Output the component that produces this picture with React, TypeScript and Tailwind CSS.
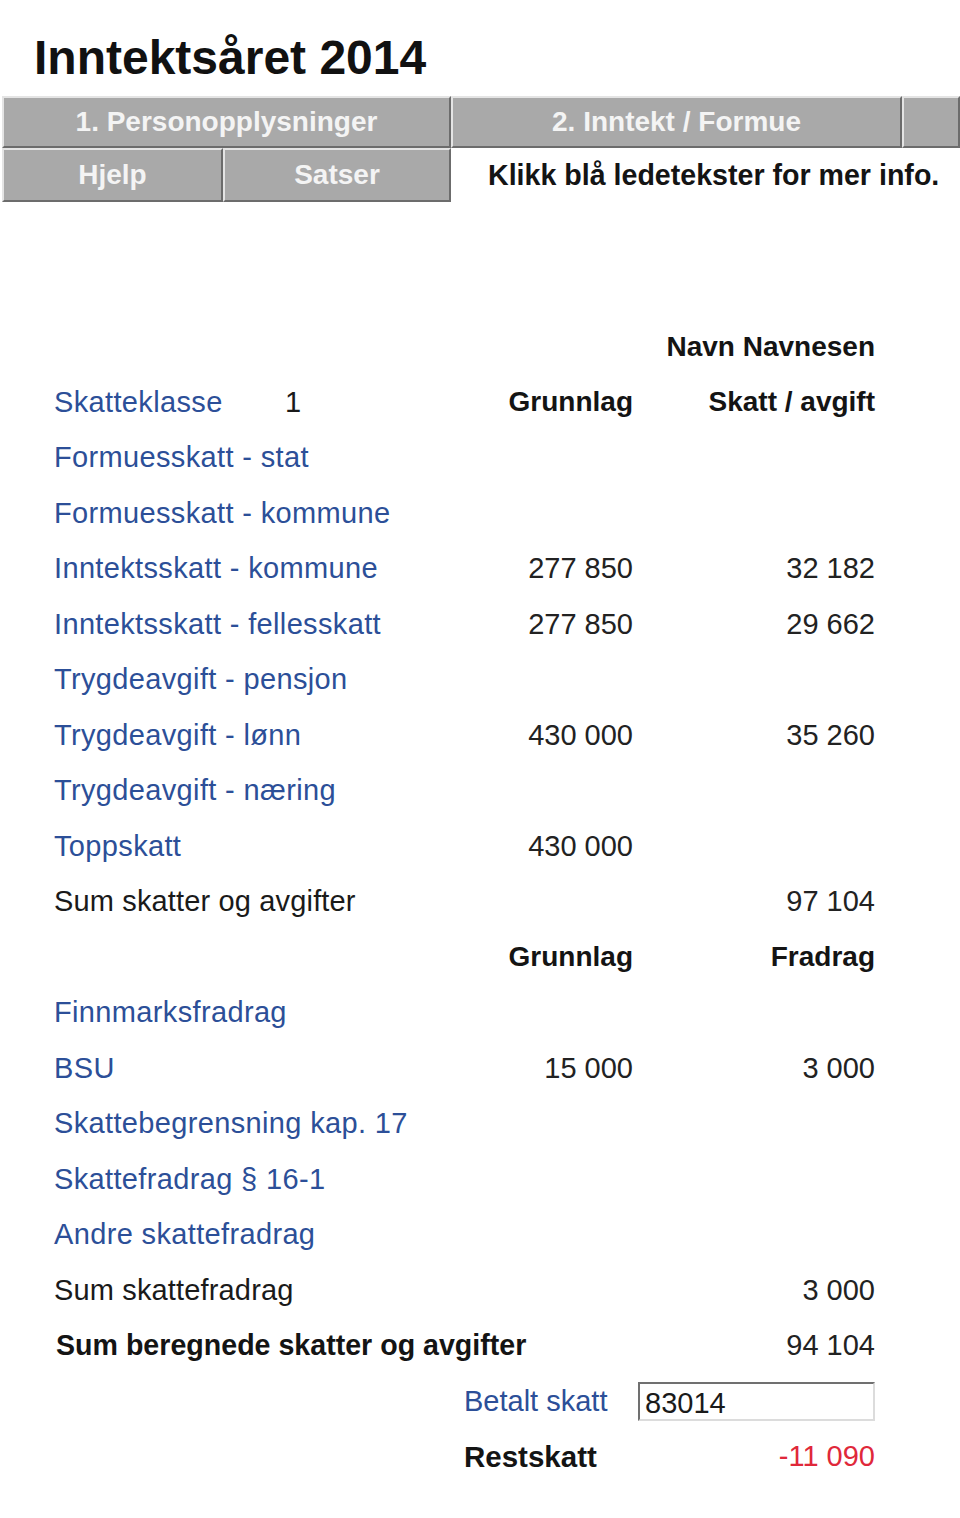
import React from 'react';

type Row = {
  label?: string;
  kind?: 'link' | 'plain' | 'bold';
  extra?: string;
  base?: string;
  value?: string;
  headBase?: boolean;
  headValue?: boolean;
};

const rows: Row[] = [
  { value: 'Navn Navnesen', headValue: true },
  { label: 'Skatteklasse', kind: 'link', extra: '1', base: 'Grunnlag', value: 'Skatt / avgift', headBase: true, headValue: true },
  { label: 'Formuesskatt - stat', kind: 'link' },
  { label: 'Formuesskatt - kommune', kind: 'link' },
  { label: 'Inntektsskatt - kommune', kind: 'link', base: '277 850', value: '32 182' },
  { label: 'Inntektsskatt - fellesskatt', kind: 'link', base: '277 850', value: '29 662' },
  { label: 'Trygdeavgift - pensjon', kind: 'link' },
  { label: 'Trygdeavgift - lønn', kind: 'link', base: '430 000', value: '35 260' },
  { label: 'Trygdeavgift - næring', kind: 'link' },
  { label: 'Toppskatt', kind: 'link', base: '430 000' },
  { label: 'Sum skatter og avgifter', kind: 'plain', value: '97 104' },
  { base: 'Grunnlag', value: 'Fradrag', headBase: true, headValue: true },
  { label: 'Finnmarksfradrag', kind: 'link' },
  { label: 'BSU', kind: 'link', base: '15 000', value: '3 000' },
  { label: 'Skattebegrensning kap. 17', kind: 'link' },
  { label: 'Skattefradrag § 16-1', kind: 'link' },
  { label: 'Andre skattefradrag', kind: 'link' },
  { label: 'Sum skattefradrag', kind: 'plain', value: '3 000' },
  { label: 'Sum beregnede skatter og avgifter', kind: 'bold', value: '94 104' },
];

const tab =
  'flex items-center justify-center bg-[#a9a9a9] border-2 border-t-[#e4e4e4] border-l-[#e4e4e4] border-b-[#6c6c6c] border-r-[#6c6c6c] text-[28px] font-bold text-[#f4f4f4] whitespace-nowrap';

const labelClass = (kind?: Row['kind']) => {
  if (kind === 'link') return 'text-[29px] tracking-[0.35px] text-[#2c4f98]';
  if (kind === 'bold') return 'text-[28.6px] font-bold text-[#141414] pl-[2px]';
  return 'text-[29px] tracking-[0.15px] text-[#1a1a1a]';
};

export default function App() {
  return (
    <div className="w-[960px] min-h-[1518px] bg-white font-['Liberation_Sans',Arial,sans-serif] text-[#1a1a1a]">
      {/* Title */}
      <h1 className="pt-[34px] pl-[34px] text-[48px] leading-[48px] font-bold text-[#111]">Inntektsåret 2014</h1>

      {/* Tabs */}
      <div className="mt-[14px] pl-[2px]">
        <div className="flex h-[52px]">
          <div className={`${tab} w-[449px]`}>1. Personopplysninger</div>
          <div className={`${tab} w-[451px]`}>2. Inntekt / Formue</div>
          <div className={`${tab} flex-1`}></div>
        </div>
        <div className="flex h-[54px]">
          <div className={`${tab} w-[221px]`}>Hjelp</div>
          <div className={`${tab} w-[228px]`}>Satser</div>
          <div className="flex flex-1 items-center pl-[37px] text-[28.6px] font-bold text-[#141414] whitespace-nowrap">
            Klikk blå ledetekster for mer info.
          </div>
        </div>
      </div>

      {/* Table */}
      <div className="pt-[117px] pl-[54px]">
        <div className="w-[821px]">
          {rows.map((r, i) => (
            <div key={i} className="grid h-[55.5px] grid-cols-[minmax(0,1fr)_160px_242px] items-center whitespace-nowrap">
              <div className="flex items-center">
                {r.label && (
                  <span className={`${labelClass(r.kind)} ${r.extra ? 'w-[231px]' : ''}`}>{r.label}</span>
                )}
                {r.extra && <span className="text-[29px] text-[#1a1a1a]">{r.extra}</span>}
              </div>
              <div className={`text-right ${r.headBase ? 'text-[28px] font-bold text-[#141414]' : 'text-[29px] text-[#222]'}`}>
                {r.base}
              </div>
              <div className={`text-right ${r.headValue ? 'text-[28px] font-bold text-[#141414]' : 'text-[29px] text-[#222]'}`}>
                {r.value}
              </div>
            </div>
          ))}

          {/* Betalt skatt */}
          <div className="flex h-[55.5px] items-center pl-[410px] whitespace-nowrap">
            <span className="w-[176px] text-[29px] text-[#2c4f98]">Betalt skatt</span>
            <input
              defaultValue="83014"
              className="h-[39px] w-[237px] border-2 border-t-[#707070] border-l-[#707070] border-b-[#dcdcdc] border-r-[#dcdcdc] bg-white px-[5px] pt-[4px] text-[29px] text-[#1a1a1a] outline-none"
            />
          </div>

          {/* Restskatt */}
          <div className="flex h-[55.5px] items-center justify-between pl-[410px] whitespace-nowrap">
            <span className="text-[29.5px] font-bold text-[#141414]">Restskatt</span>
            <span className="text-[29px] text-[#e0283a]">-11 090</span>
          </div>
        </div>
      </div>
    </div>
  );
}
